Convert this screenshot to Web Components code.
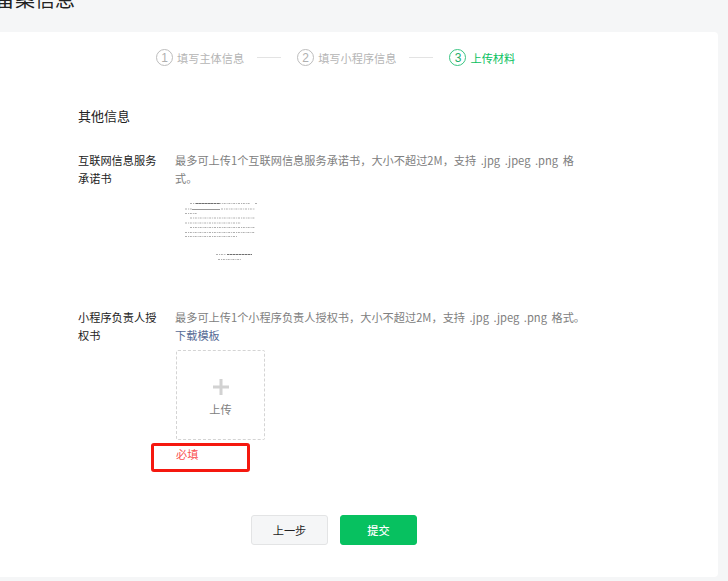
<!DOCTYPE html>
<html lang="zh">
<head>
<meta charset="utf-8">
<title>备案信息</title>
<style>
  html, body { margin: 0; height: 100%; overflow: hidden; background: #f5f6f7; }
  body { font-family: "Noto Sans CJK SC", "Liberation Sans", sans-serif; }
</style>
</head>
<body>
<filing-page>
  <step-bar>
    <step-item num="1" label="填写主体信息"></step-item>
    <step-item num="2" label="填写小程序信息"></step-item>
    <step-item num="3" label="上传材料" active></step-item>
  </step-bar>
  <h-section>其他信息</h-section>
  <form-row label="互联网信息服务承诺书">
    <span>最多可上传1个互联网信息服务承诺书，大小不超过2M，支持 .jpg .jpeg .png 格式。</span>
    <doc-thumb></doc-thumb>
  </form-row>
  <form-row label="小程序负责人授权书">
    <span>最多可上传1个小程序负责人授权书，大小不超过2M，支持 .jpg .jpeg .png 格式。</span>
    <a-link>下载模板</a-link>
    <upload-box></upload-box>
    <req-note>必填</req-note>
  </form-row>
  <form-actions>
    <app-button>上一步</app-button>
    <app-button primary>提交</app-button>
  </form-actions>
</filing-page>

<script>
class FilingPage extends HTMLElement {
  constructor() {
    super();
    this.attachShadow({mode: "open"}).innerHTML = `
    <style>
      :host { display: block; width: 723px; margin-left: -5px; color: #1a1a1a; }
      h1 { margin: -15px 0 0; height: 47px; font-size: 20px; line-height: 28px; font-weight: 400; color: #222; }
      .card { background: #fff; border-radius: 4px; height: 545px; box-sizing: border-box; padding: 15px 0 0 83px; }
    </style>
    <h1>备案信息</h1>
    <div class="card"><slot></slot></div>`;
  }
}

class StepBar extends HTMLElement {
  constructor() {
    super();
    this.attachShadow({mode: "open"}).innerHTML = `
    <style>
      :host { display: flex; align-items: center; height: 21px; padding: 0 0 0 78px; gap: 13px; }
    </style>
    <slot></slot>`;
  }
}

class StepItem extends HTMLElement {
  constructor() {
    super();
    const active = this.hasAttribute("active");
    const first = this.getAttribute("num") === "1";
    this.attachShadow({mode: "open"}).innerHTML = `
    <style>
      :host { display: flex; align-items: center; font-size: 11.2px; color: ${active ? "#07c160" : "#b5b5b5"}; }
      .line { width: 24px; height: 1px; background: #e3e3e3; margin-right: 16px; display: ${first ? "none" : "block"}; }
      .num { box-sizing: border-box; width: 17px; height: 17px; border-radius: 50%; margin-right: 4px;
             border: 1px solid ${active ? "#38c582" : "#bdbdbd"}; display: flex; align-items: center; justify-content: center;
             font: 12px "Liberation Sans", sans-serif; color: ${active ? "#1fae6a" : "#b0b0b0"}; }
    </style>
    <span class="line"></span><span class="num">${this.getAttribute("num")}</span><span>${this.getAttribute("label")}</span>`;
  }
}

class HSection extends HTMLElement {
  constructor() {
    super();
    this.attachShadow({mode: "open"}).innerHTML = `
    <style>
      :host { display: block; margin-top: 39px; font-size: 13px; line-height: 18px; color: #222; }
    </style>
    <slot></slot>`;
  }
}

class FormRow extends HTMLElement {
  constructor() {
    super();
    this.attachShadow({mode: "open"}).innerHTML = `
    <style>
      :host { display: grid; grid-template-columns: 80px 414px; column-gap: 17px; margin-top: 26px;
              font-size: 11.2px; line-height: 18px; }
      .label { color: #222; }
      .body { color: #808080; display: flex; flex-direction: column; align-items: flex-start; word-spacing: 2px; }
    </style>
    <div class="label">${this.getAttribute("label")}</div>
    <div class="body"><slot></slot></div>`;
  }
}

class ALink extends HTMLElement {
  constructor() {
    super();
    this.attachShadow({mode: "open"}).innerHTML = `
    <style>:host { display: block; color: #576b95; }</style><slot></slot>`;
  }
}

class DocThumb extends HTMLElement {
  constructor() {
    super();
    this.attachShadow({mode: "open"}).innerHTML = `
    <style>
      :host { display: block; width: 90px; height: 89px; margin-top: 6px; }
      svg { display: block; filter: blur(.5px); }
    </style>
    <svg width="90" height="89" viewBox="0 0 90 89" fill="none" stroke-width="1">
      <g stroke="#b0b0b0" stroke-dasharray="2 1 1 .8">
        <path d="M15 10.500H75M80 10.500H82M10 16H17M46 16H80M10 20.500H22"/>
        <path d="M15 25H80M10 30H66M15 34.500H80M10 39.500H80M10 43.500H62"/>
        <path d="M41 61.500H51M43 66.500H66"/>
      </g>
      <g stroke="#707070" stroke-dasharray="2.500 .5">
        <path d="M21 10.500H45M52 61.500H77"/>
      </g>
      <path d="M17 16.500H45" stroke="#999"/>
    </svg>`;
  }
}

class UploadBox extends HTMLElement {
  constructor() {
    super();
    this.attachShadow({mode: "open"}).innerHTML = `
    <style>
      :host { display: flex; flex-direction: column; align-items: center; box-sizing: border-box;
              width: 89px; height: 90px; margin: 6px 0 0 1px; padding-top: 28px;
              border: 1px dashed #d4d4d4; border-radius: 2px; color: #808080; }
      svg { display: block; margin-bottom: 5px; }
    </style>
    <svg width="16" height="16" viewBox="0 0 16 16"><path d="M6.500 0h3v6.500H16v3H9.500V16h-3V9.500H0v-3h6.500z" fill="#d2d2d2"/></svg>
    <span>上传</span>`;
  }
}

class ReqNote extends HTMLElement {
  constructor() {
    super();
    this.attachShadow({mode: "open"}).innerHTML = `
    <style>
      :host { display: block; position: relative; margin: 5px 0 0 1px; color: #fa5151; }
      .mark { position: absolute; left: -25px; top: -2px; width: 99px; height: 29px; box-sizing: border-box;
              border: 3px solid #f5180f; border-radius: 3px; }
    </style>
    <slot></slot><span class="mark"></span>`;
  }
}

class FormActions extends HTMLElement {
  constructor() {
    super();
    this.attachShadow({mode: "open"}).innerHTML = `
    <style>:host { display: flex; gap: 12px; margin: 52px 0 0 173px; }</style><slot></slot>`;
  }
}

class AppButton extends HTMLElement {
  constructor() {
    super();
    const primary = this.hasAttribute("primary");
    this.attachShadow({mode: "open"}).innerHTML = `
    <style>
      :host { display: flex; align-items: center; justify-content: center; box-sizing: border-box; width: 77px; height: 30px;
              border-radius: 3px; font-size: 11.2px; font-weight: ${primary ? 500 : 400};
              background: ${primary ? "#07c160" : "#f5f6f7"}; color: ${primary ? "#fff" : "#222"};
              border: 1px solid ${primary ? "#07c160" : "#e3e4e5"}; }
    </style>
    <slot></slot>`;
  }
}

customElements.define("filing-page", FilingPage);
customElements.define("step-bar", StepBar);
customElements.define("step-item", StepItem);
customElements.define("h-section", HSection);
customElements.define("form-row", FormRow);
customElements.define("a-link", ALink);
customElements.define("doc-thumb", DocThumb);
customElements.define("upload-box", UploadBox);
customElements.define("req-note", ReqNote);
customElements.define("form-actions", FormActions);
customElements.define("app-button", AppButton);
</script>
</body>
</html>
